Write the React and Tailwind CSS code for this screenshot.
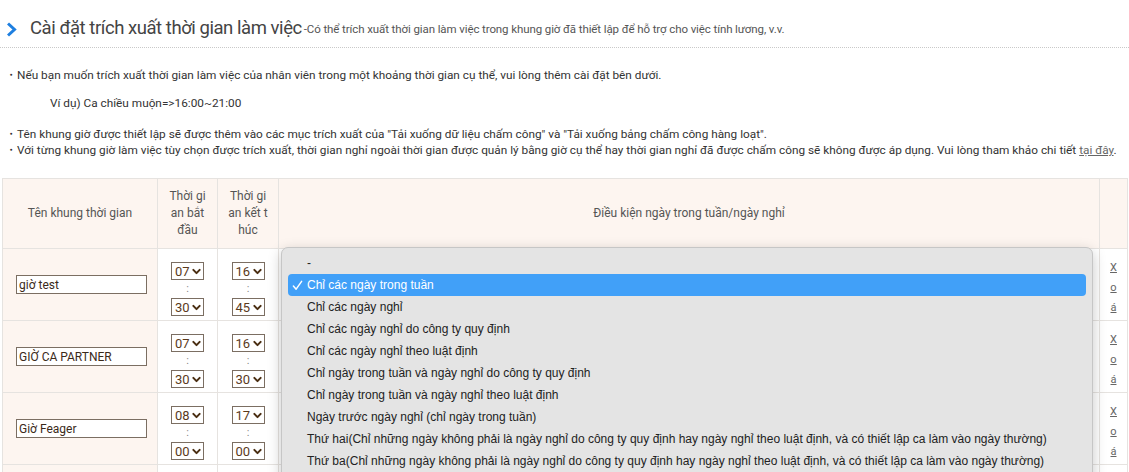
const rows = [
    { name: 'giờ test', sh: '07', sm: '30', eh: '16', em: '45' },
    { name: 'GIỜ CA PARTNER', sh: '07', sm: '30', eh: '16', em: '30' },
    { name: 'Giờ Feager', sh: '08', sm: '00', eh: '17', em: '00' },
];

const options = [
    '-',
    'Chỉ các ngày trong tuần',
    'Chỉ các ngày nghỉ',
    'Chỉ các ngày nghỉ do công ty quy định',
    'Chỉ các ngày nghỉ theo luật định',
    'Chỉ ngày trong tuần và ngày nghỉ do công ty quy định',
    'Chỉ ngày trong tuần và ngày nghỉ theo luật định',
    'Ngày trước ngày nghỉ (chỉ ngày trong tuần)',
    'Thứ hai(Chỉ những ngày không phải là ngày nghỉ do công ty quy định hay ngày nghỉ theo luật định, và có thiết lập ca làm vào ngày thường)',
    'Thứ ba(Chỉ những ngày không phải là ngày nghỉ do công ty quy định hay ngày nghỉ theo luật định, và có thiết lập ca làm vào ngày thường)',
    'Thứ tư(Chỉ những ngày không phải là ngày nghỉ do công ty quy định hay ngày nghỉ theo luật định, và có thiết lập ca làm vào ngày thường)',
];

function TimeSelect({ value }) {
    return (
        <div className="mx-auto flex h-[18px] w-[33px] items-center justify-between border border-[#7b6e62] bg-white pl-[3px] pr-[2px] text-[13px] leading-none text-[#5b3a1c]">
            <span>{value}</span>
            <svg className="h-[9px] w-[9px]" viewBox="0 0 10 10" fill="none" stroke="#4a2e12" strokeWidth="2.2" strokeLinecap="round" strokeLinejoin="round"><path d="M1.5 3.2 5 6.8l3.5-3.6" /></svg>
        </div>
    );
}

function TimeCell({ h, m }) {
    return (
        <td className="border border-[#e6e3e0] align-top">
            <div className="flex flex-col items-center pt-[13px]">
                <TimeSelect value={h} />
                <span className="my-[1px] h-[16px] text-[11px] leading-[16px] text-[#888]">:</span>
                <TimeSelect value={m} />
            </div>
        </td>
    );
}

export default function App() {
    return (
        <div className="relative h-[472px] overflow-hidden bg-white font-['Roboto',sans-serif] text-[#333]">
            {/* Title */}
            <div className="flex items-end border-b border-dotted border-[#c9c9c9] pb-[6px] pl-[7px] pt-[15px]">
                <svg className="mb-[4px] h-[15px] w-[10px]" viewBox="0 0 10 15"><path d="M1 1.5 7.5 7.5 1 13.5" fill="none" stroke="#1e7fe0" strokeWidth="3" strokeLinejoin="miter" /></svg>
                <h1 className="ml-[13px] text-[18.5px] leading-[26px] tracking-[-0.45px] text-[#444]">Cài đặt trích xuất thời gian làm việc</h1>
                <span className="mb-[3px] ml-[2px] text-[11.5px] tracking-[-0.1px] text-[#555]">-Có thể trích xuất thời gian làm việc trong khung giờ đã thiết lập để hỗ trợ cho việc tính lương, v.v.</span>
            </div>

            {/* Notes */}
            <div className="pl-[5px] text-[11.8px] leading-[16px] text-[#333]">
                <p className="mt-[19px]">・Nếu bạn muốn trích xuất thời gian làm việc của nhân viên trong một khoảng thời gian cụ thể, vui lòng thêm cài đặt bên dưới.</p>
                <p className="mt-[12px] pl-[45px]">Ví dụ) Ca chiều muộn=&gt;16:00~21:00</p>
                <p className="mt-[15px]">・Tên khung giờ được thiết lập sẽ được thêm vào các mục trích xuất của "Tải xuống dữ liệu chấm công" và "Tải xuống bảng chấm công hàng loạt".</p>
                <p className="whitespace-nowrap">・Với từng khung giờ làm việc tùy chọn được trích xuất, thời gian nghỉ ngoài thời gian được quản lý bằng giờ cụ thể hay thời gian nghỉ đã được chấm công sẽ không được áp dụng. Vui lòng tham khảo chi tiết <a className="text-[#666] underline">tại đây</a>.</p>
            </div>

            {/* Table */}
            <table className="ml-[2px] mt-[20px] w-[1126px] table-fixed border-collapse text-[12px] text-[#555]">
                <colgroup>
                    <col className="w-[155px]" />
                    <col className="w-[60px]" />
                    <col className="w-[61px]" />
                    <col />
                    <col className="w-[28px]" />
                </colgroup>
                <thead>
                    <tr className="h-[70px] bg-[#fdf5f0] text-center leading-[17px]">
                        <th className="border border-[#e6e3e0] font-normal">Tên khung thời gian</th>
                        <th className="border border-[#e6e3e0] font-normal">Thời gi<br />an bắt<br />đầu</th>
                        <th className="border border-[#e6e3e0] font-normal">Thời gi<br />an kết t<br />húc</th>
                        <th className="border border-[#e6e3e0] font-normal">Điều kiện ngày trong tuần/ngày nghỉ</th>
                        <th className="border border-[#e6e3e0] font-normal"></th>
                    </tr>
                </thead>
                <tbody>
                    {rows.map((r) => (
                        <tr key={r.name} className="h-[72px]">
                            <td className="border border-[#e6e3e0] bg-[#fdf5f0] pl-[13px]">
                                <div className="flex h-[19px] w-[131px] items-center border border-[#7b6e62] bg-white pl-[2px] text-[12px] text-[#3b2a1a]">{r.name}</div>
                            </td>
                            <TimeCell h={r.sh} m={r.sm} />
                            <TimeCell h={r.eh} m={r.em} />
                            <td className="border border-[#e6e3e0]"></td>
                            <td className="border border-[#e6e3e0] align-top">
                                <div className="flex flex-col items-center pt-[9px] text-[11px] leading-[20px] text-[#666]">
                                    <span className="underline">X</span>
                                    <span className="underline">o</span>
                                    <span className="underline">á</span>
                                </div>
                            </td>
                        </tr>
                    ))}
                    <tr className="h-[72px]">
                        <td className="border border-[#e6e3e0] bg-[#fdf5f0]"></td>
                        <td className="border border-[#e6e3e0]"></td>
                        <td className="border border-[#e6e3e0]"></td>
                        <td className="border border-[#e6e3e0]"></td>
                        <td className="border border-[#e6e3e0]"></td>
                    </tr>
                </tbody>
            </table>

            {/* Open select menu */}
            <div className="absolute left-[281px] top-[247px] w-[812px] rounded-[7px] border border-[#c6c6c6] bg-[#e4e4e4] px-[6px] pt-[4px] font-['Liberation_Sans',sans-serif] text-[12px] text-[#222] shadow-[0_4px_14px_rgba(0,0,0,0.22)]">
                {options.map((o, i) => (
                    <div
                        key={o}
                        className={
                            i === 1
                                ? 'relative flex h-[22px] items-center whitespace-nowrap rounded-[4px] bg-[#41a0f8] pl-[19px] text-white'
                                : 'relative flex h-[22px] items-center whitespace-nowrap pl-[19px]'
                        }
                    >
                        {i === 1 && (
                            <svg className="absolute left-[4px] top-[6px] h-[11px] w-[11px]" viewBox="0 0 12 12" fill="none" stroke="white" strokeWidth="1.6" strokeLinecap="round" strokeLinejoin="round"><path d="M1.5 6.5 4.5 10 10.5 1.5" /></svg>
                        )}
                        {o}
                    </div>
                ))}
            </div>
        </div>
    );
}
